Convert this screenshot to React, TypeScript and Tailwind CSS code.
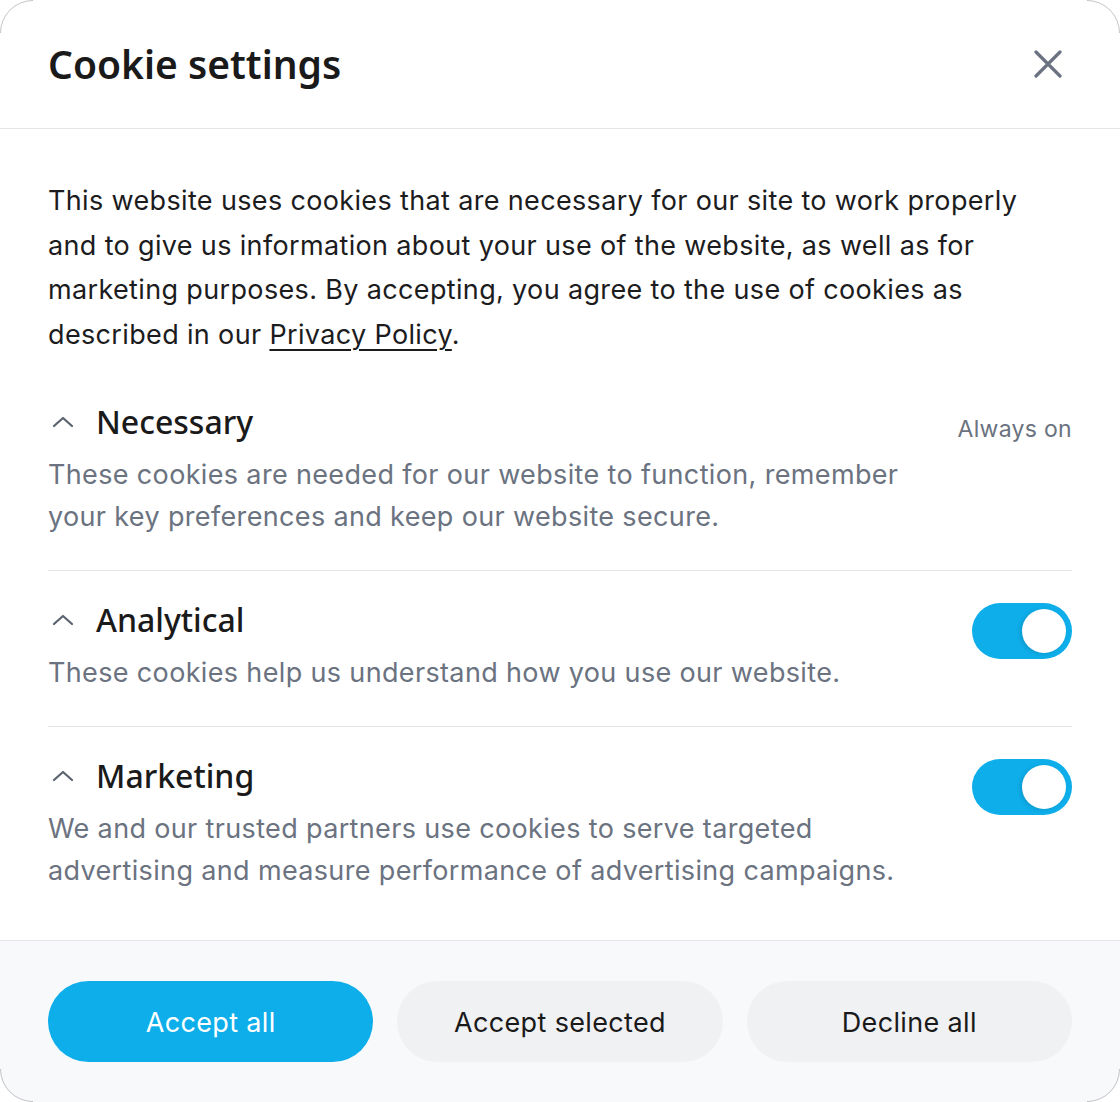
import React from "react";

const Chevron = () => (
  <svg width="22" height="12" viewBox="0 0 22 12" fill="none" className="shrink-0">
    <path d="M2 10 L11 2 L20 10" stroke="#5b6270" strokeWidth="2.2" strokeLinecap="round" strokeLinejoin="round" />
  </svg>
);

const Toggle = () => (
  <div className="w-[100px] h-[56px] rounded-full bg-[#0eaeea] shrink-0 mt-[7px] flex items-center justify-end pr-[6px]">
    <div className="w-[44px] h-[44px] rounded-full bg-white shadow-[-2px_1px_4px_rgba(0,0,0,0.12)]" />
  </div>
);

function Section({
  title,
  desc,
  right,
  border,
  top,
  bottom,
}: {
  title: string;
  desc: React.ReactNode;
  right: React.ReactNode;
  border?: boolean;
  top: string;
  bottom: string;
}) {
  return (
    <div className={`flex gap-12 ${top} ${bottom} ${border ? "border-b border-[#e4e4e9]" : ""}`}>
      <div className="flex-1 min-w-0">
        <div className="flex items-center gap-[22px] pl-[4px] h-[48px]">
          <Chevron />
          <span className="text-[32px] leading-[48px] font-medium text-[#1a1a1a] font-['Noto_Sans',sans-serif]">{title}</span>
        </div>
        <p className="mt-[8px] text-[27px] tracking-[0.35px] leading-[42px] text-[#6b7280] font-['Inter',sans-serif]">{desc}</p>
      </div>
      {right}
    </div>
  );
}

const Arc = ({ className, d }: { className: string; d: string }) => (
  <svg width="34" height="34" viewBox="0 0 34 34" className={`absolute ${className}`} fill="none">
    <path d={d} stroke="#c4c4c8" strokeWidth="1" />
  </svg>
);

export default function App() {
  return (
    <div className="relative w-[1120px] h-[1102px] bg-white">
      <div className="w-full h-full rounded-[32px] overflow-hidden flex flex-col bg-white">
        <header className="h-[129px] shrink-0 border-b border-[#e4e4e9] flex items-center justify-between pl-12 pr-[58px]">
          <h1 className="text-[39px] font-semibold text-[#1a1a1a] font-['Noto_Sans',sans-serif] mt-[1px]">Cookie settings</h1>
          <svg width="28" height="28" viewBox="0 0 28 28" fill="none">
            <path d="M2 2 L26 26 M26 2 L2 26" stroke="#6b7280" strokeWidth="3.2" strokeLinecap="round" />
          </svg>
        </header>
        <main className="flex-1 px-12 pt-[50px]">
          <p className="text-[27px] tracking-[0.35px] leading-[44.6px] text-[#1c1c1e] font-['Inter',sans-serif]">
            This website uses cookies that are necessary for our site to work properly and to give us information about your use of the website, as well as for marketing purposes. By accepting, you agree to the use of cookies as described in our{" "}
            <span className="underline underline-offset-[5px] decoration-[2px]">Privacy Policy</span>.
          </p>
          <div className="mt-[41px]">
            <Section
              title="Necessary"
              desc="These cookies are needed for our website to function, remember your key preferences and keep our website secure."
              right={<span className="text-[23px] tracking-[0.3px] leading-[30px] text-[#6b7280] mt-[16px] font-['Inter',sans-serif] shrink-0">Always on</span>}
              border
              top=""
              bottom="pb-[32px]"
            />
            <Section
              title="Analytical"
              desc="These cookies help us understand how you use our website."
              right={<Toggle />}
              border
              top="pt-[25px]"
              bottom="pb-[32px]"
            />
            <Section
              title="Marketing"
              desc="We and our trusted partners use cookies to serve targeted advertising and measure performance of advertising campaigns."
              right={<Toggle />}
              top="pt-[25px]"
              bottom=""
            />
          </div>
        </main>
        <footer className="h-[162px] shrink-0 border-t border-[#e4e4e9] bg-[#f8f9fb] px-12 pt-[40px] grid grid-cols-3 gap-6">
          <button className="h-[81px] pt-[3px] rounded-full bg-[#0eaeea] text-white text-[27px] tracking-[0.35px] font-['Inter',sans-serif]">Accept all</button>
          <button className="h-[81px] pt-[3px] rounded-full bg-[#f0f1f3] text-[#1a1a1a] text-[27px] tracking-[0.35px] font-['Inter',sans-serif]">Accept selected</button>
          <button className="h-[81px] pt-[3px] rounded-full bg-[#f0f1f3] text-[#1a1a1a] text-[27px] tracking-[0.35px] font-['Inter',sans-serif]">Decline all</button>
        </footer>
      </div>
      <Arc className="left-0 top-0" d="M0.5 33 A32.5 32.5 0 0 1 33 0.5" />
      <Arc className="right-0 top-0" d="M1 0.5 A32.5 32.5 0 0 1 33.5 33" />
      <Arc className="left-0 bottom-0" d="M0.5 1 A32.5 32.5 0 0 0 33 33.5" />
      <Arc className="right-0 bottom-0" d="M33.5 1 A32.5 32.5 0 0 1 1 33.5" />
    </div>
  );
}
